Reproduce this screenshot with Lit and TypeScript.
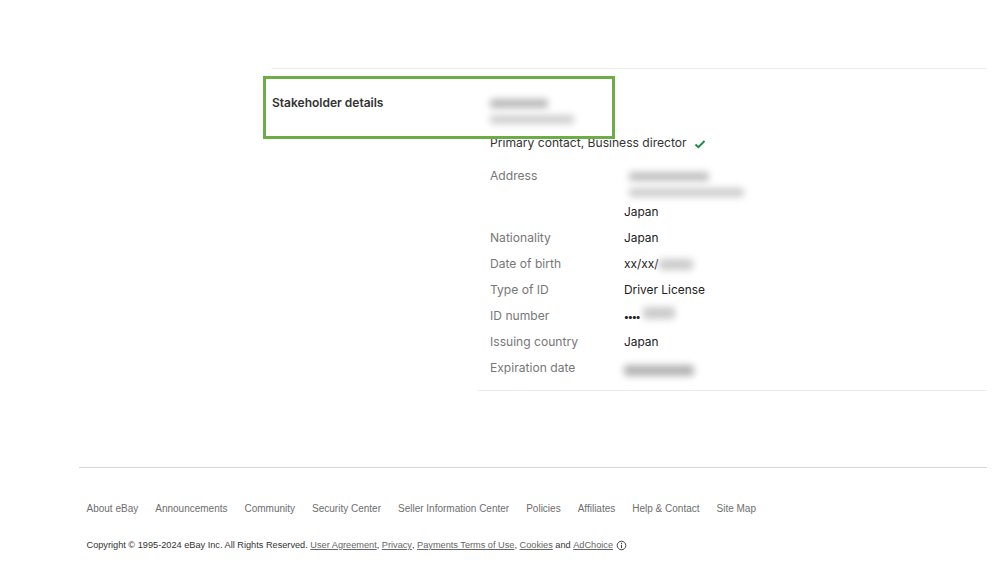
import { LitElement, html, css } from "lit";
import { customElement } from "lit/decorators.js";

const rows: [string, unknown][] = [
  ["Nationality", "Japan"],
  ["Date of birth", html`xx/xx/<span class="smudge date"></span>`],
  ["Type of ID", "Driver License"],
  ["ID number", html`<span class="dots">••••</span><span class="smudge idn"></span>`],
  ["Issuing country", "Japan"],
  ["Expiration date", html`<span class="smudge exp"></span>`],
];
const links = ["About eBay","Announcements","Community","Security Center","Seller Information Center","Policies","Affiliates","Help & Contact","Site Map"];

@customElement("app-root")
export class AppRoot extends LitElement {
  static styles = css`
    :host { display: block; width: 1000px; height: 577px; overflow: hidden; background: #fff; position: relative; font-family: Inter, "Liberation Sans", sans-serif; color: #333; }
    .main { padding: 68px 13px 0 272px; }
    .section { border-top: 1px solid #ececec; display: flex; padding-top: 26px; height: 323px; box-sizing: border-box; }
    .heading { width: 218px; font-size: 12px; font-weight: 600; line-height: 16px; color: #333; }
    .details { flex: 1; margin-left: -12px; padding-left: 12px; border-bottom: 1px solid #ececec; font-size: 12.1px; }
    .name { display: flex; flex-direction: column; gap: 7px; padding-top: 4px; height: 33px; box-sizing: border-box; }
    .primary { display: flex; align-items: center; gap: 7px; height: 18px; margin-top: 6px; line-height: 18px; }
    .primary svg { display: block; margin-top: 2px; }
    .label { color: #777; line-height: 18px; }
    .value { line-height: 18px; display: flex; align-items: center; height: 18px; font-size: 11.9px; color: #222; }
    .first-row { display: grid; grid-template-columns: 134px 1fr; height: 62px; margin-top: 15px; }
    .addr { display: flex; flex-direction: column; }
    .lines { display: flex; flex-direction: column; gap: 7px; padding: 5px 0 0 5px; height: 36px; box-sizing: border-box; }
    .addr-country { line-height: 18px; font-size: 11.9px; color: #222; }
    .grid { display: grid; grid-template-columns: 134px 1fr; grid-auto-rows: 26px; }
    .smudge { display: block; height: 9px; background: #bdbdbd; filter: blur(3.5px); border-radius: 3px; }
    .s1 { width: 58px; background: #b8b8b8; }
    .s2 { width: 84px; background: #cfcfcf; }
    .a1 { width: 80px; background: #c0c0c0; }
    .a2 { width: 115px; background: #cdcdcd; }
    .date { width: 34px; height: 11px; background: #cbcbcb; }
    .idn { width: 32px; height: 12px; background: #cbcbcb; margin: -6px 0 0 3px; }
    .exp { width: 70px; height: 11px; background: #b4b4b4; margin-top: 4px; }
    .dots { font-size: 10px; letter-spacing: -0.8px; font-weight: 700; }
    .footer { margin: 76px 13px 0 79px; border-top: 1px solid #d8d8d8; font-family: "Liberation Sans", Arial, sans-serif; padding: 34px 0 0 7.5px; }
    .links { display: flex; gap: 17px; font-size: 10px; line-height: 14px; color: #6e6e6e; }
    .copy { display: flex; align-items: center; margin-top: 22px; font-size: 9.2px; line-height: 14px; color: #333; white-space: pre; }
    .copy u { color: #666; }
    .copy svg { margin-left: 3px; display: block; }
    .highlight { position: absolute; left: 263px; top: 76px; width: 352px; height: 63px; box-sizing: border-box; border: 3px solid #6cad45; pointer-events: none; }
  `;

  render() {
    return html`
      <div class="main">
        <div class="section">
          <div class="heading">Stakeholder details</div>
          <div class="details">
            <div class="name"><span class="smudge s1"></span><span class="smudge s2"></span></div>
            <div class="primary">Primary contact, Business director
              <svg width="12" height="10" viewBox="0 0 12 10" fill="none"><path d="M1.5 5.5 L4.4 8.2 L10.5 2" stroke="#1e8a4c" stroke-width="2"/></svg>
            </div>
            <div class="first-row">
              <div class="label">Address</div>
              <div class="addr">
                <div class="lines"><span class="smudge a1"></span><span class="smudge a2"></span></div>
                <div class="addr-country">Japan</div>
              </div>
            </div>
            <div class="grid">
              ${rows.map(([l, v]) => html`<div class="label">${l}</div><div class="value">${v}</div>`)}
            </div>
          </div>
        </div>
      </div>
      <div class="footer">
        <div class="links">${links.map((l) => html`<span>${l}</span>`)}</div>
        <div class="copy">Copyright © 1995-2024 eBay Inc. All Rights Reserved. <u>User Agreement</u>, <u>Privacy</u>, <u>Payments Terms of Use</u>, <u>Cookies</u> and <u>AdChoice</u>
          <svg width="11" height="11" viewBox="0 0 11 11" fill="none"><circle cx="5.5" cy="5.5" r="4.3" stroke="#444" stroke-width="1"/><path d="M5.5 4.8V8.2M5.5 2.8V3.9" stroke="#444" stroke-width="1.1"/></svg>
        </div>
      </div>
      <div class="highlight"></div>
    `;
  }
}
